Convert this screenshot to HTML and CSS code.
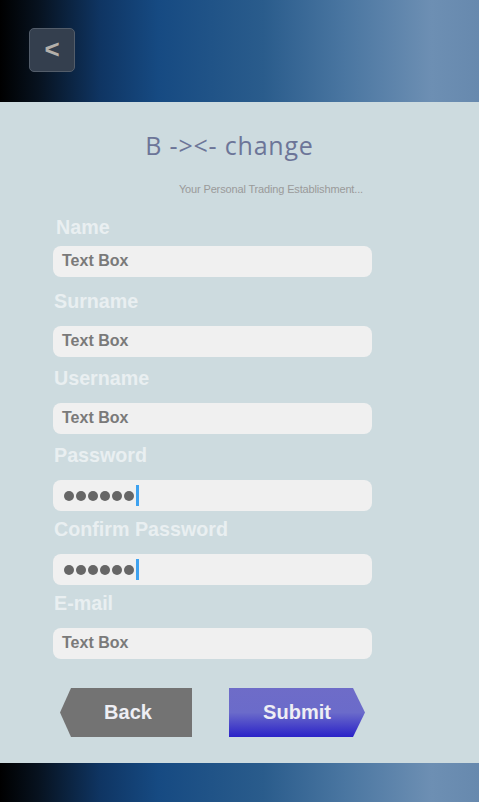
FILE: index.html
```html
<!DOCTYPE html>
<html lang="en">
<head>
  <meta charset="UTF-8" />
  <meta name="viewport" content="width=device-width, initial-scale=1.0"/>
  <title>B -&gt;&lt;- change | Register</title>
  <link rel="stylesheet" href="styles.css">
</head>
<body>

  <!-- Top bar -->
  <header class="top-bar">
    <a href="#" class="back-btn">&lt;</a>
  </header>

  <!-- Content -->
  <main class="content">
    <div class="brand">
      <h1 class="brand-title">B -&gt;&lt;- change</h1>
      <p class="brand-sub">Your Personal Trading Establishment...</p>
    </div>

    <form class="register">
      <div class="field field-first">
        <label>Name</label>
        <div class="box">Text Box</div>
      </div>
      <div class="field field-loose">
        <label>Surname</label>
        <div class="box">Text Box</div>
      </div>
      <div class="field">
        <label>Username</label>
        <div class="box">Text Box</div>
      </div>
      <div class="field">
        <label>Password</label>
        <div class="box"><span class="dots"><i></i><i></i><i></i><i></i><i></i><i></i></span><span class="caret"></span></div>
      </div>
      <div class="field field-tight">
        <label>Confirm Password</label>
        <div class="box"><span class="dots"><i></i><i></i><i></i><i></i><i></i><i></i></span><span class="caret"></span></div>
      </div>
      <div class="field field-tight">
        <label>E-mail</label>
        <div class="box">Text Box</div>
      </div>
    </form>

    <div class="actions">
      <a href="#" class="btn btn-back">Back</a>
      <a href="#" class="btn btn-submit">Submit</a>
    </div>
  </main>

  <!-- Bottom bar -->
  <footer class="bottom-bar"></footer>

</body>
</html>
```

FILE: styles.css
```css
body {
  margin: 0;
  padding: 0;
  background: #cddbdf;
  font-family: "Liberation Sans", Arial, sans-serif;
}

.top-bar,
.bottom-bar {
  background: linear-gradient(90deg, #000 0%, #07121f 8%, #0f3563 21%, #164a82 33%, #2a5c8c 55%, #4a76a1 72%, #6d8fb3 90%, #6789ae 100%);
}

.top-bar {
  height: 102px;
  box-sizing: border-box;
  padding: 28px 0 0 29px;
}

.bottom-bar {
  height: 39px;
}

.back-btn {
  display: flex;
  align-items: center;
  justify-content: center;
  width: 46px;
  height: 44px;
  box-sizing: border-box;
  background: #343f4e;
  border: 1px solid #535d6a;
  border-radius: 5px;
  color: #b4b0aa;
  font-family: "Liberation Sans", sans-serif;
  font-weight: bold;
  font-size: 26px;
  line-height: 1;
  text-decoration: none;
  padding-bottom: 2px;
}

.content {
  height: 661px;
  box-sizing: border-box;
  padding-top: 28px;
}

.brand {
  margin-right: 20px;
}

.brand-title {
  margin: 0;
  text-align: center;
  font-family: "Open Sans", sans-serif;
  font-weight: normal;
  font-size: 25px;
  line-height: 30px;
  letter-spacing: 0.8px;
  color: #6c7598;
}

.brand-sub {
  margin: 23px 96px 0 0;
  text-align: right;
  font-size: 11px;
  line-height: 13px;
  letter-spacing: -0.15px;
  color: #9a9a9a;
}

.register {
  width: 319px;
  margin: 20px 0 0 53px;
}

.field {
  margin-top: 10px;
}

.field-first {
  margin-top: 0;
}

.field-loose {
  margin-top: 13px;
}

.field-tight {
  margin-top: 7px;
}

.field label {
  display: block;
  padding-left: 1px;
  margin-bottom: 14px;
  font-size: 19.7px;
  line-height: 22px;
  font-weight: bold;
  color: #e9eff1;
}

.field-first label {
  margin-bottom: 8px;
  padding-left: 3px;
}

.box {
  display: flex;
  align-items: center;
  height: 31px;
  box-sizing: border-box;
  padding: 0 0 2px 9px;
  background: #f0f0f0;
  border-radius: 8px;
  font-size: 16px;
  line-height: 29px;
  font-weight: bold;
  color: #7a7a7a;
}

.dots {
  display: flex;
  gap: 2px;
  margin-left: 2px;
  padding-top: 2px;
}

.dots i {
  width: 10px;
  height: 10px;
  border-radius: 50%;
  background: #666;
}

.caret {
  width: 3px;
  height: 21px;
  margin: 2px 0 0 2px;
  background: #3ea2f0;
}

.actions {
  display: flex;
  gap: 37px;
  margin: 29px 0 0 60px;
}

.btn {
  display: flex;
  align-items: center;
  justify-content: center;
  height: 49px;
  box-sizing: border-box;
  font-size: 20px;
  font-weight: bold;
  text-decoration: none;
  color: #eeeef4;
}

.btn-back {
  width: 132px;
  padding-left: 4px;
  background: #737373;
  clip-path: polygon(11px 0, 100% 0, 100% 100%, 11px 100%, 0 50%);
}

.btn-submit {
  width: 136px;
  background: linear-gradient(180deg, #6e6cc8 0%, #6b6bca 50%, #2a22c8 100%);
  clip-path: polygon(0 0, calc(100% - 12px) 0, 100% 50%, calc(100% - 12px) 100%, 0 100%);
}
```
